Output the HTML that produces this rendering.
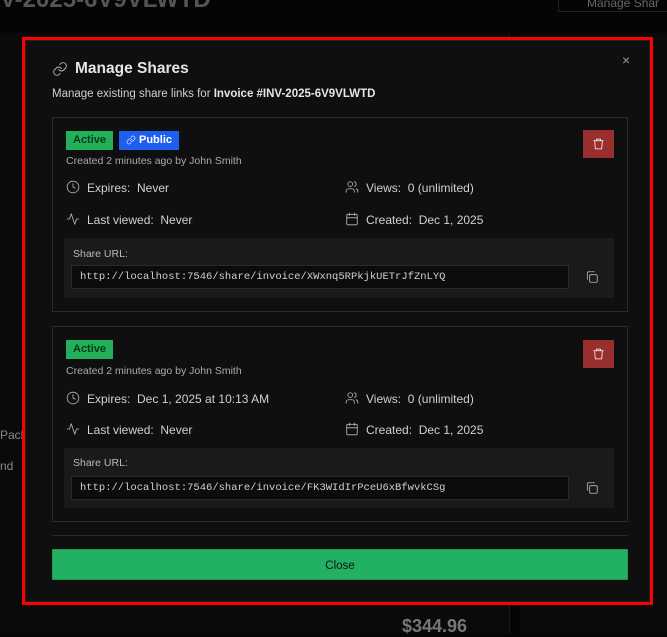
<!DOCTYPE html>
<html><head><style>
*{box-sizing:border-box;margin:0;padding:0}
body{width:667px;height:635px;background:#050505;position:relative;overflow:hidden;font-family:"Liberation Sans",sans-serif;color:#d4d4d4}
.a{position:absolute}
.t{font-size:12px;color:#d0d0d0;white-space:nowrap}
.card{position:absolute;left:52px;width:576px;border:1px solid #2a2a2a;background:#0f0f0f}
.badge{position:absolute;height:19px;font-size:11px;font-weight:bold;line-height:19px;padding:0 7px}
.mono{font-family:"Liberation Mono",monospace;font-size:10.5px;color:#d0d0d0}
svg{position:absolute;fill:none;stroke:#bbb;stroke-width:1.4;stroke-linecap:round;stroke-linejoin:round}
</style></head><body>
<div class="a" style="left:0;top:-14px;font-size:24px;font-weight:bold;color:#555">V-2025-6V9VLWTD</div>
<div class="a" style="left:558px;top:-8px;width:120px;height:20px;border:1px solid #222"><span class="t" style="position:absolute;left:28px;top:3px;color:#666">Manage Shar</span></div>
<div class="a" style="left:0;top:33px;width:510px;height:600px;background:#0a0a0a;border-right:1px solid #1a1a1a"></div>
<div class="a" style="left:520px;top:33px;width:147px;height:600px;background:#0a0a0a"></div>
<div class="a t" style="left:0;top:428px;color:#888">Pack</div>
<div class="a t" style="left:0;top:459px;color:#888">nd</div>
<div class="a" style="left:402px;top:616px;font-size:18px;font-weight:bold;color:#777">$344.96</div>
<div class="a" style="left:22px;top:37px;width:631px;height:568px;border:3px solid #f00"></div>
<div class="a" style="left:25px;top:40px;width:625px;height:562px;background:#0f0f0f;border:1px solid #222"></div>
<div class="a" style="left:622px;top:52px;font-size:14px;color:#999">×</div>
<svg style="left:52px;top:61px" width="16" height="16" viewBox="0 0 24 24"><path d="M10 13a5 5 0 0 0 7.5.5l3-3a5 5 0 0 0-7-7l-1.7 1.7"/><path d="M14 11a5 5 0 0 0-7.5-.5l-3 3a5 5 0 0 0 7 7l1.7-1.7"/></svg>
<div class="a" style="left:75px;top:60px;font-size:15.5px;font-weight:bold;color:#e5e5e5">Manage Shares</div>
<div class="a t" style="left:52px;top:88px;font-size:11.5px">Manage existing share links for <b style="color:#e5e5e5">Invoice #INV-2025-6V9VLWTD</b></div>

<div class="card" style="top:117px;height:195px">
 <div class="badge" style="left:13px;top:13px;background:#22b05a;color:#053a1a">Active</div>
 <div class="badge" style="left:66px;top:13px;background:#1f5ff0;color:#fff;padding-left:20px">Public</div>
 <svg style="left:73px;top:17px;stroke:#fff" width="10" height="10" viewBox="0 0 24 24"><path d="M10 13a5 5 0 0 0 7.5.5l3-3a5 5 0 0 0-7-7l-1.7 1.7"/><path d="M14 11a5 5 0 0 0-7.5-.5l-3 3a5 5 0 0 0 7 7l1.7-1.7"/></svg>
 <div class="a t" style="left:13px;top:37px;font-size:10.5px;color:#aaa">Created 2 minutes ago by John Smith</div>
 <div class="a" style="left:530px;top:12px;width:31px;height:28px;background:#9a2f2f"></div>
 <svg style="left:539px;top:19px;stroke:#fff" width="13" height="14" viewBox="0 0 24 24"><path d="M3 6h18M8 6V3h8v3M5 6l1 15h12l1-15"/></svg>
 <svg style="left:13px;top:62px" width="14" height="14" viewBox="0 0 24 24"><circle cx="12" cy="12" r="10"/><path d="M12 6v6l4 2"/></svg>
 <div class="a t" style="left:34px;top:63px">Expires:&nbsp; Never</div>
 <svg style="left:292px;top:62px" width="14" height="14" viewBox="0 0 24 24"><path d="M16 21v-2a4 4 0 0 0-4-4H6a4 4 0 0 0-4 4v2"/><circle cx="9" cy="7" r="4"/><path d="M22 21v-2a4 4 0 0 0-3-3.9M16 3.1a4 4 0 0 1 0 7.8"/></svg>
 <div class="a t" style="left:313px;top:63px">Views:&nbsp; 0 (unlimited)</div>
 <svg style="left:13px;top:94px" width="14" height="14" viewBox="0 0 24 24"><path d="M22 12h-4l-3 9L9 3l-3 9H2"/></svg>
 <div class="a t" style="left:34px;top:95px">Last viewed:&nbsp; Never</div>
 <svg style="left:292px;top:94px" width="14" height="14" viewBox="0 0 24 24"><rect x="3" y="4" width="18" height="18" rx="2"/><path d="M16 2v4M8 2v4M3 10h18"/></svg>
 <div class="a t" style="left:313px;top:95px">Created:&nbsp; Dec 1, 2025</div>
 <div class="a" style="left:11px;top:120px;width:550px;height:60px;background:#1a1a1a"></div>
 <div class="a t" style="left:20px;top:130px;font-size:10.5px;color:#bbb">Share URL:</div>
 <div class="a" style="left:18px;top:147px;width:498px;height:24px;background:#0c0c0c;border:1px solid #2a2a2a"><div class="mono" style="position:absolute;left:8px;top:5px">http://localhost:7546/share/invoice/XWxnq5RPkjkUETrJfZnLYQ</div></div>
 <svg style="left:532px;top:152px" width="14" height="14" viewBox="0 0 24 24"><rect x="8" y="8" width="13" height="13" rx="2"/><path d="M4 16V5a2 2 0 0 1 2-2h10"/></svg>
</div>

<div class="card" style="top:326px;height:196px">
 <div class="badge" style="left:13px;top:13px;background:#22b05a;color:#053a1a">Active</div>
 <div class="a t" style="left:13px;top:38px;font-size:10.5px;color:#aaa">Created 2 minutes ago by John Smith</div>
 <div class="a" style="left:530px;top:13px;width:31px;height:28px;background:#9a2f2f"></div>
 <svg style="left:539px;top:20px;stroke:#fff" width="13" height="14" viewBox="0 0 24 24"><path d="M3 6h18M8 6V3h8v3M5 6l1 15h12l1-15"/></svg>
 <svg style="left:13px;top:64px" width="14" height="14" viewBox="0 0 24 24"><circle cx="12" cy="12" r="10"/><path d="M12 6v6l4 2"/></svg>
 <div class="a t" style="left:34px;top:65px">Expires:&nbsp; Dec 1, 2025 at 10:13 AM</div>
 <svg style="left:292px;top:64px" width="14" height="14" viewBox="0 0 24 24"><path d="M16 21v-2a4 4 0 0 0-4-4H6a4 4 0 0 0-4 4v2"/><circle cx="9" cy="7" r="4"/><path d="M22 21v-2a4 4 0 0 0-3-3.9M16 3.1a4 4 0 0 1 0 7.8"/></svg>
 <div class="a t" style="left:313px;top:65px">Views:&nbsp; 0 (unlimited)</div>
 <svg style="left:13px;top:95px" width="14" height="14" viewBox="0 0 24 24"><path d="M22 12h-4l-3 9L9 3l-3 9H2"/></svg>
 <div class="a t" style="left:34px;top:96px">Last viewed:&nbsp; Never</div>
 <svg style="left:292px;top:95px" width="14" height="14" viewBox="0 0 24 24"><rect x="3" y="4" width="18" height="18" rx="2"/><path d="M16 2v4M8 2v4M3 10h18"/></svg>
 <div class="a t" style="left:313px;top:96px">Created:&nbsp; Dec 1, 2025</div>
 <div class="a" style="left:11px;top:121px;width:550px;height:60px;background:#1a1a1a"></div>
 <div class="a t" style="left:20px;top:130px;font-size:10.5px;color:#bbb">Share URL:</div>
 <div class="a" style="left:18px;top:149px;width:498px;height:24px;background:#0c0c0c;border:1px solid #2a2a2a"><div class="mono" style="position:absolute;left:8px;top:5px">http://localhost:7546/share/invoice/FK3WIdIrPceU6xBfwvkCSg</div></div>
 <svg style="left:532px;top:154px" width="14" height="14" viewBox="0 0 24 24"><rect x="8" y="8" width="13" height="13" rx="2"/><path d="M4 16V5a2 2 0 0 1 2-2h10"/></svg>
</div>

<div class="a" style="left:52px;top:535px;width:576px;height:1px;background:#2a2a2a"></div>
<div class="a" style="left:52px;top:549px;width:576px;height:31px;background:#22b063;border:1px solid #1c9a52;text-align:center;line-height:32px;font-size:11.5px;color:#111">Close</div>
</body></html>
